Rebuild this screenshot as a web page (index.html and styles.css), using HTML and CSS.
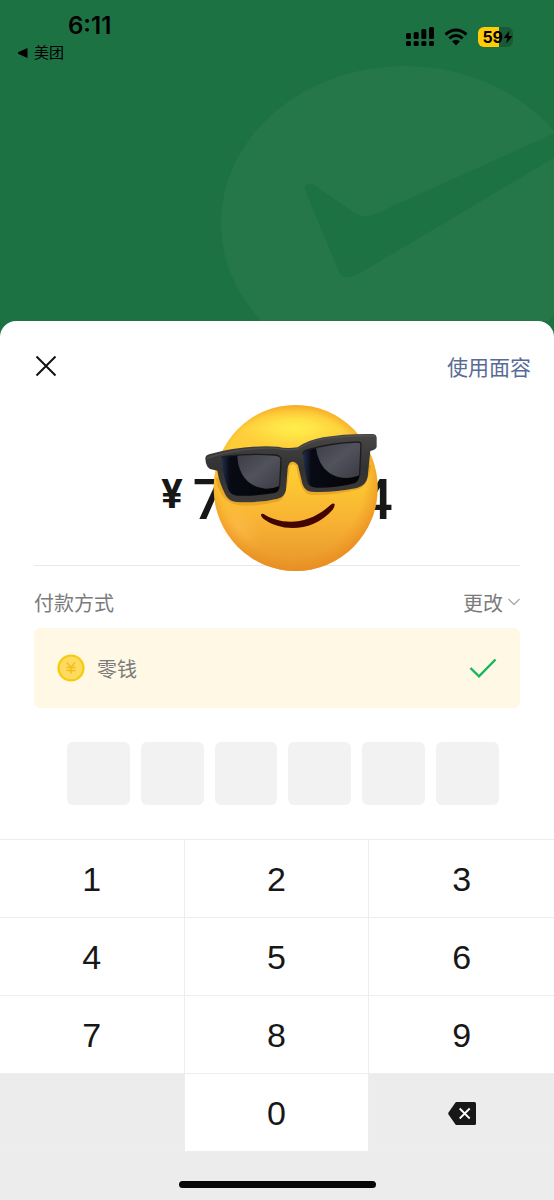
FILE: index.html
```html
<!DOCTYPE html>
<html lang="zh-CN">
<head>
<meta charset="utf-8">
<meta name="viewport" content="width=device-width, initial-scale=1">
<title>付款</title>
<link rel="stylesheet" href="styles.css">
</head>
<body>
<div class="screen">
  <header class="hero">
    <svg class="hero-logo" viewBox="0 0 333 255" aria-hidden="true">
      <ellipse cx="184" cy="157" rx="184" ry="157" fill="#25774a"/>
      <path d="M84 124Q82 118 88 118Q91 117 95 120L129 144Q141 154 154 148L336 66V90L136 209Q123 215 118 206Z" fill="#1d7244"/>
    </svg>
    <div class="status">
      <div class="status-left">
        <time class="clock">6:11</time>
        <a class="back" href="#"><svg width="10" height="10" viewBox="0 0 10 10" aria-hidden="true"><path d="M9.500 0V10L0 5.700V4.300Z"/></svg>美团</a>
      </div>
      <div class="status-right">
        <svg width="28" height="20" viewBox="0 0 28 20" aria-hidden="true">
          <rect x="0" y="6" width="5" height="6" rx="1.500"/><rect x="7.700" y="5" width="5" height="7" rx="1.500"/><rect x="15.300" y="2" width="5" height="10" rx="1.500"/><rect x="23" y="0" width="5" height="12" rx="1.500"/>
          <rect x="0" y="14" width="5" height="5" rx="1.500"/><rect x="7.700" y="14" width="5" height="5" rx="1.500"/><rect x="15.300" y="14" width="5" height="5" rx="1.500"/><rect x="23" y="14" width="5" height="5" rx="1.500"/>
        </svg>
        <svg width="24" height="18" viewBox="0 0 24 18" aria-hidden="true">
          <path d="M1.500 6.500Q12-2.500 22.500 6.500M5.300 10.300Q12 4.700 18.700 10.300" fill="none" stroke="#000" stroke-width="3"/>
          <path d="M8 13.300Q12 10 16 13.300L12 17.500Z"/>
        </svg>
        <div class="battery"><span>59</span><svg width="10" height="14" viewBox="0 0 10 14" aria-hidden="true"><path d="M6.500 0.500L0.500 8H4.300L3.300 13.500L9.500 6H5.600Z"/></svg></div>
      </div>
    </div>
  </header>

  <main class="sheet">
    <div class="sheet-head">
      <button class="close" type="button" aria-label="关闭"><svg width="22" height="22" viewBox="0 0 22 22"><path d="M1.500 1.500L20.500 20.500M20.500 1.500L1.500 20.500" stroke="#111" stroke-width="2" fill="none"/></svg></button>
      <button class="face" type="button">使用面容</button>
    </div>

    <section class="amount">
      <span class="yen">¥</span>
      <span class="digits"><span>7</span><span>4</span></span>
      <svg class="emoji" viewBox="160 40 528 510" role="img" aria-label="墨镜笑脸">
        <defs>
          <linearGradient id="face" x1="0" y1="0" x2="0" y2="1">
            <stop offset="0" stop-color="#fab52d"/><stop offset=".14" stop-color="#fed03c"/><stop offset=".45" stop-color="#fdc932"/><stop offset=".7" stop-color="#f8b233"/><stop offset="1" stop-color="#e6952c"/>
          </linearGradient>
          <radialGradient id="edge" cx=".48" cy=".47" r=".53">
            <stop offset=".82" stop-color="#ef9420" stop-opacity="0"/><stop offset="1" stop-color="#e88a1c" stop-opacity=".65"/>
          </radialGradient>
          <radialGradient id="shine"><stop offset="0" stop-color="#ffee4c"/><stop offset=".4" stop-color="#ffe848" stop-opacity=".8"/><stop offset="1" stop-color="#ffdf40" stop-opacity="0"/></radialGradient>
          <radialGradient id="cheek"><stop offset="0" stop-color="#ffc055" stop-opacity=".5"/><stop offset="1" stop-color="#ffc052" stop-opacity="0"/></radialGradient>
          <linearGradient id="frame" x1="0" y1="0" x2="0" y2="1"><stop offset="0" stop-color="#484746"/><stop offset=".5" stop-color="#333232"/><stop offset="1" stop-color="#3d3b3a"/></linearGradient>
          <linearGradient id="lens" x1="0" y1="0" x2="1" y2="1"><stop offset="0" stop-color="#3a3b45"/><stop offset=".5" stop-color="#51525c"/><stop offset="1" stop-color="#383942"/></linearGradient>
          <linearGradient id="dark" x1="0" y1="0" x2="1" y2="0"><stop offset="0" stop-color="#27375a"/><stop offset=".16" stop-color="#080b14"/><stop offset="1" stop-color="#030406"/></linearGradient>
          <clipPath id="left-lens"><path d="M215 204Q218 201 226 200Q300 191 375 196Q395 197 394 211L390 289Q389 308 371 311Q320 320 263 318Q242 316 235 297Q220 260 215 204Z"/></clipPath>
          <clipPath id="right-lens"><path d="M460 194Q460 185 472 181Q540 160 623 157Q635 156 634 167L630 255Q628 278 609 282Q550 296 499 294Q477 293 472 274Q461 233 460 194Z"/></clipPath>
        </defs>
        <ellipse cx="438" cy="295" rx="246" ry="249" fill="url(#face)"/>
        <ellipse cx="435" cy="115" rx="165" ry="64" fill="url(#shine)"/>
        <ellipse cx="270" cy="410" rx="55" ry="85" fill="url(#cheek)" transform="rotate(-35 270 410)"/>
        <ellipse cx="438" cy="295" rx="246" ry="249" fill="url(#edge)"/>
        <path d="M203 265Q215 335 270 342Q330 346 385 331Q408 323 415 228Q428 210 445 228Q456 303 480 310Q545 315 625 294Q650 285 660 225" fill="none" stroke="#d88718" stroke-opacity=".45" stroke-width="10"/>
        <path d="M167 207Q167 197 178 194Q280 165 385 171Q408 178 444 173Q475 151 520 143Q590 131 668 133Q681 133 681 145V171Q680 179 662 184L654 262Q649 288 622 295Q545 310 484 306Q465 303 458 282L445 227Q437 215 428 216Q417 217 414 236L409 301Q405 322 384 327Q330 341 260 337Q236 334 226 313Q208 278 203 243L181 238Q172 233 169 221Z" fill="url(#frame)"/>
        <path d="M172 205Q280 171 382 176Q408 183 445 178Q480 154 528 146Q600 136 675 139" fill="none" stroke="#666464" stroke-opacity=".4" stroke-width="4"/>
        <g clip-path="url(#left-lens)">
          <path d="M210 185H400V325H210Z" fill="url(#dark)"/>
          <path d="M263 185C260 245 290 294 350 297Q375 297 400 285V185Z" fill="url(#lens)"/>
        </g>
        <g clip-path="url(#right-lens)">
          <path d="M455 150H640V300H455Z" fill="url(#dark)"/>
          <path d="M498 145C495 218 532 264 588 265Q618 265 640 250V145Z" fill="url(#lens)"/>
        </g>
        <path d="M215 204Q218 201 226 200Q300 191 375 196Q395 197 394 211L390 289M460 194Q460 185 472 181Q540 160 623 157Q635 156 634 167L630 255" fill="none" stroke="#1c1c1e" stroke-width="4"/>
        <path d="M334 376Q335 370 342 373C390 404 472 412 543 345Q552 338 555 344Q556 350 549 360C487 430 393 426 341 387Q334 381 334 376Z" fill="#430500"/>
      </svg>
    </section>

    <section class="method">
      <div class="method-head">
        <h2>付款方式</h2>
        <button class="change" type="button">更改<svg width="12" height="8" viewBox="0 0 12 8" aria-hidden="true"><path d="M0.500 1L6 6.500L11.500 1" fill="none" stroke="#aaa" stroke-width="1.300"/></svg></button>
      </div>
      <button class="card" type="button">
        <svg width="28" height="28" viewBox="0 0 28 28" aria-hidden="true"><circle cx="14" cy="14" r="12.400" fill="#fddb60" stroke="#f7cb12" stroke-width="2.400"/><path d="M10 8.500L14 13.500L18 8.500M14 13.500V19.500M9.500 13.500H18.500M9.500 16.500H18.500" fill="none" stroke="#f4bd18" stroke-width="1.500"/></svg>
        <span class="card-name">零钱</span>
        <svg width="28" height="20" viewBox="0 0 28 20" aria-hidden="true"><path d="M1.500 10L10 18.300L26.500 1.500" fill="none" stroke="#14b75c" stroke-width="2.400"/></svg>
      </button>
    </section>

    <form class="pin" aria-label="支付密码">
      <input type="password" maxlength="1" aria-label="密码第1位">
      <input type="password" maxlength="1" aria-label="密码第2位">
      <input type="password" maxlength="1" aria-label="密码第3位">
      <input type="password" maxlength="1" aria-label="密码第4位">
      <input type="password" maxlength="1" aria-label="密码第5位">
      <input type="password" maxlength="1" aria-label="密码第6位">
    </form>

    <div class="keypad">
      <button type="button">1</button><button type="button">2</button><button type="button">3</button>
      <button type="button">4</button><button type="button">5</button><button type="button">6</button>
      <button type="button">7</button><button type="button">8</button><button type="button">9</button>
      <span class="blank"></span><button type="button">0</button>
      <button class="blank" type="button" aria-label="删除"><svg width="28" height="23" viewBox="0 0 28 23"><path d="M8.500 0H26.500Q28 0 28 1.500V21.500Q28 23 26.500 23H8.500Q8 23 7.500 22.500L0.500 12.500Q0 11.500 0.500 10.500L7.500 0.500Q8 0 8.500 0Z" fill="#171717"/><path d="M11.700 6.500L21.700 16.500M21.700 6.500L11.700 16.500" stroke="#fff" stroke-width="1.800" fill="none"/></svg></button>
    </div>
    <footer class="home"><span class="home-bar"></span></footer>
  </main>
</div>
</body>
</html>
```
FILE: styles.css
```css
* { box-sizing: border-box; }

body {
  margin: 0;
  background: #1d7244;
  color: #171717;
  font-family: "Liberation Sans", "Noto Sans CJK SC", sans-serif;
}

button {
  margin: 0;
  padding: 0;
  border: 0;
  background: none;
  color: inherit;
  font: inherit;
}

svg { display: block; flex: none; }

.screen {
  min-height: 100vh;
  display: flex;
  flex-direction: column;
}

.hero {
  position: relative;
  flex: none;
  height: 321px;
}

.hero-logo {
  position: absolute;
  top: 66px;
  right: 0;
  width: 333px;
  height: 255px;
}

.status {
  position: relative;
  display: flex;
  justify-content: space-between;
  padding: 12px 41px 0 18px;
  color: #000;
}

.clock {
  display: block;
  margin-left: 50px;
  font: 600 24px/28px Inter, sans-serif;
}

.back {
  display: flex;
  align-items: center;
  gap: 6px;
  margin-top: 2px;
  color: #000;
  font-size: 15px;
  line-height: 22px;
  text-decoration: none;
}

.status-right {
  display: flex;
  align-items: center;
  gap: 10px;
  height: 50px;
}

.battery {
  display: flex;
  align-items: center;
  justify-content: flex-end;
  width: 35px;
  height: 20px;
  border-radius: 6px;
  background: linear-gradient(90deg, #ffcc06 60%, #185a36 60%);
  font: 700 16px/20px Inter, sans-serif;
}

.sheet {
  flex: 1;
  display: flex;
  flex-direction: column;
  overflow: hidden;
  border-radius: 16px 16px 0 0;
  background: #fff;
}

.sheet-head {
  display: flex;
  align-items: center;
  justify-content: space-between;
  height: 90px;
  padding: 0 23px 0 35px;
}

.face {
  color: #576b95;
  font-size: 21px;
}

.amount {
  position: relative;
  display: flex;
  justify-content: center;
  gap: 10px;
  height: 155px;
  margin: 0 34px;
  padding-top: 56px;
  border-bottom: 1px solid #e8e8e8;
  font: 500 56px/66px Roboto, sans-serif;
}

.yen {
  font-size: 40px;
  font-weight: 700;
  line-height: 56px;
}

.digits {
  display: flex;
  justify-content: space-between;
  width: 200px;
}

.emoji {
  position: absolute;
  top: -8px;
  left: calc(50% - 74px);
  width: 176px;
  height: 170px;
}

.method {
  margin: 0 34px;
  color: #7b7b7b;
  font-size: 20px;
}

.method-head {
  display: flex;
  align-items: center;
  justify-content: space-between;
  height: 62px;
  padding-top: 10px;
}

.method h2 { margin: 0; font: inherit; }

.change {
  display: flex;
  align-items: center;
  gap: 5px;
}

.card {
  display: flex;
  align-items: center;
  gap: 12px;
  width: 100%;
  height: 80px;
  padding: 0 23px;
  border-radius: 6px;
  background: #fff8e4;
}

.card-name { flex: 1; text-align: left; }

.pin {
  display: grid;
  grid-template-columns: repeat(6, 1fr);
  gap: 11px;
  margin: 34px 55px 34px 67px;
}

.pin input {
  width: 100%;
  height: 63px;
  padding: 0;
  border: 0;
  border-radius: 6px;
  background: #f2f2f2;
  font-size: 34px;
  text-align: center;
}

.keypad {
  display: grid;
  grid-template-columns: repeat(3, 1fr);
  grid-auto-rows: 78px;
  border-top: 1px solid #ececec;
  font-size: 34px;
}

.keypad > * {
  display: flex;
  align-items: center;
  justify-content: center;
  padding-top: 2px;
  border-right: 1px solid #ededed;
  border-bottom: 1px solid #ededed;
}

.keypad > :nth-child(3n) { border-right: 0; }

.keypad .blank { background: #ececec; }

.home {
  flex: 1;
  display: flex;
  align-items: flex-end;
  justify-content: center;
  min-height: 48px;
  padding-bottom: 12px;
  background: #ececec;
}

.home-bar {
  width: 197px;
  height: 7px;
  border-radius: 4px;
  background: #070707;
}
```
